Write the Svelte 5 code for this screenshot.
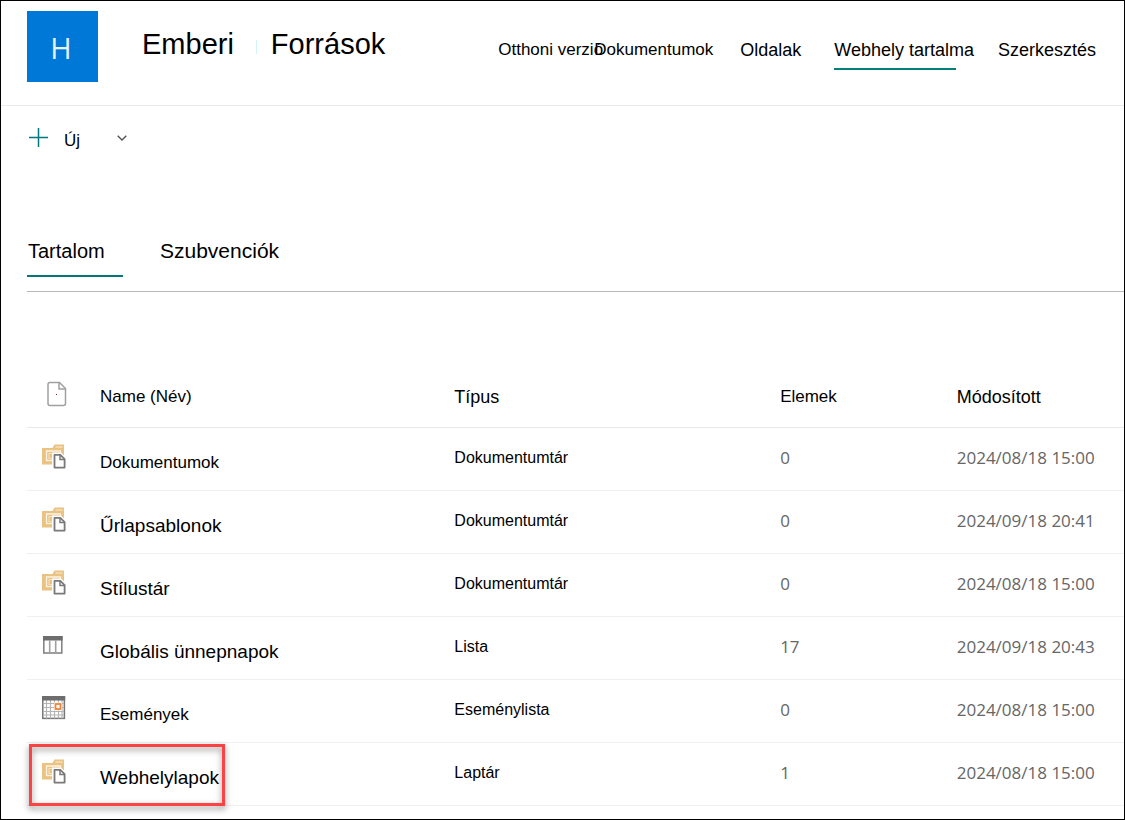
<script>
    const navItems = [
        { label: 'Otthoni verzió', kind: 'home' },
        { label: 'Dokumentumok', kind: 'docs' },
        { label: 'Oldalak', kind: 'pages large' },
        { label: 'Webhely tartalma', kind: 'contents large', current: true },
        { label: 'Szerkesztés', kind: 'edit large' }
    ];

    const rows = [
        { icon: 'library', name: 'Dokumentumok', size: 'regular', type: 'Dokumentumtár', items: 0, modified: '2024/08/18 15:00' },
        { icon: 'library', name: 'Űrlapsablonok', size: 'large', type: 'Dokumentumtár', items: 0, modified: '2024/09/18 20:41' },
        { icon: 'library', name: 'Stílustár', size: 'large', type: 'Dokumentumtár', items: 0, modified: '2024/08/18 15:00' },
        { icon: 'list', name: 'Globális ünnepnapok', size: 'large', type: 'Lista', items: 17, modified: '2024/09/18 20:43' },
        { icon: 'events', name: 'Események', size: 'regular', type: 'Eseménylista', items: 0, modified: '2024/08/18 15:00' },
        { icon: 'library', name: 'Webhelylapok', size: 'large', type: 'Laptár', items: 1, modified: '2024/08/18 15:00', highlighted: true }
    ];

    let activeTab = $state('contents');
</script>

<div class="page">
    <header class="site-header">
        <div class="logo">H</div>
        <h1 class="title">
            <span>Emberi</span>
            <span class="title-divider"></span>
            <span>Források</span>
        </h1>
        <nav class="site-nav">
            {#each navItems as item}
                <a href="#top" class="nav-link {item.kind}" class:current={item.current}>{item.label}</a>
            {/each}
        </nav>
    </header>

    <div class="command-bar">
        <button class="new-button" type="button">
            <svg width="20" height="20" viewBox="0 0 20 20" aria-hidden="true">
                <path d="M10.5 0V19M1 9.5H20" stroke="#03787c" stroke-width="1.5" fill="none" />
            </svg>
            <span class="new-label">Új</span>
            <svg class="chevron" width="10" height="6" viewBox="0 0 10 6" aria-hidden="true">
                <path d="M0.7 0.7L5 4.9L9.3 0.7" stroke="#555" stroke-width="1.4" fill="none" />
            </svg>
        </button>
    </div>

    <main class="content">
        <div class="tabs" role="tablist">
            <button
                type="button"
                role="tab"
                class="tab"
                class:active={activeTab === 'contents'}
                aria-selected={activeTab === 'contents'}
                onclick={() => (activeTab = 'contents')}
            >Tartalom</button>
            <button
                type="button"
                role="tab"
                class="tab"
                class:active={activeTab === 'subsites'}
                aria-selected={activeTab === 'subsites'}
                onclick={() => (activeTab = 'subsites')}
            >Szubvenciók</button>
        </div>

        <table class="list">
            <thead>
                <tr>
                    <th class="col-icon">
                        <svg width="20" height="26" viewBox="0 0 20 26" aria-hidden="true">
                            <path d="M3 1.5H12.5L18.5 7.5V22.5Q18.5 24.5 16.5 24.5H3Q1 24.5 1 22.5V3.5Q1 1.5 3 1.5Z" fill="#fff" stroke="#a0a0a0" stroke-width="1.5" />
                            <path d="M12 1.5V8H18.5" fill="none" stroke="#a0a0a0" stroke-width="1.5" />
                            <rect x="9" y="13" width="1" height="1" fill="#7a1f1f" />
                        </svg>
                    </th>
                    <th class="col-name">Name (Név)</th>
                    <th class="col-type large">Típus</th>
                    <th class="col-items">Elemek</th>
                    <th class="col-modified large">Módosított</th>
                </tr>
            </thead>
            <tbody>
                {#each rows as row}
                    <tr>
                        <td class="col-icon" class:highlighted={row.highlighted}>
                            {#if row.icon === 'library'}
                                <svg width="24" height="25" viewBox="0 0 24 25" aria-hidden="true">
                                    <path d="M0 4H10.5L12.5 0.5H22V20.5H0Z" fill="#eac282" />
                                    <path d="M13.5 3H20.5" stroke="#f8e6c8" stroke-width="1.2" />
                                    <path d="M4.5 17V7H18.5V10" fill="none" stroke="#fdf3e2" stroke-width="1.3" />
                                    <path d="M4 16.5H11" stroke="#fdf3e2" stroke-width="1.3" />
                                    <rect x="7" y="9.5" width="7" height="5" fill="none" stroke="#f8e2c0" stroke-width="1" />
                                    <path d="M9 8.5H19L24 13.5V25H10V8.5Z" fill="#fff" />
                                    <path d="M12.5 10.8H18.3L22.6 15.1V23.6H12.5Z" fill="#fff" stroke="#797979" stroke-width="1.8" stroke-linejoin="round" />
                                    <path d="M18 11V15.5H22.6" fill="none" stroke="#797979" stroke-width="1.5" />
                                </svg>
                            {:else if row.icon === 'list'}
                                <svg width="21" height="18" viewBox="0 0 21 18" aria-hidden="true">
                                    <rect x="1.8" y="0.8" width="18" height="16.2" fill="#fff" stroke="#858585" stroke-width="1.6" />
                                    <rect x="1" y="0" width="19.6" height="4.5" fill="#6d6d6d" />
                                    <path d="M7.7 4.5V17M13.7 4.5V17" stroke="#a0a0a0" stroke-width="1.6" />
                                </svg>
                            {:else}
                                <svg width="24" height="24" viewBox="0 0 24 24" aria-hidden="true">
                                    <rect x="0.8" y="0.8" width="21.6" height="21.6" fill="#fff" stroke="#777" stroke-width="1.5" />
                                    <path d="M4.5 4V22.5M8.5 4V22.5M12.5 4V22.5M16.5 4V22.5M20 4V22.5M1 7.5H22M1 11.5H22M1 15.5H22M1 19H22" stroke="#b4b4b4" stroke-width="1.2" />
                                    <rect x="0" y="0" width="23.2" height="4.5" fill="#6d6d6d" />
                                    <rect x="12" y="6.5" width="8" height="8" fill="#fff" />
                                    <rect x="13.5" y="8" width="5" height="5" fill="#fff" stroke="#ef8435" stroke-width="1.8" />
                                </svg>
                            {/if}
                        </td>
                        <td class="col-name"><a href="#top" class={row.size}>{row.name}</a></td>
                        <td class="col-type">{row.type}</td>
                        <td class="col-items">{row.items}</td>
                        <td class="col-modified">{row.modified}</td>
                    </tr>
                {/each}
            </tbody>
        </table>
    </main>
</div>

<style>
    :global(body) {
        background: #fff;
    }

    .page {
        box-sizing: border-box;
        min-height: 100vh;
        border: 1px solid #000;
        color: #000;
        font-family: "Liberation Sans", Arial, sans-serif;
        font-size: 17px;
        line-height: 20px;
    }

    .site-header {
        display: flex;
        align-items: flex-start;
        padding: 10px 28px 23px 26px;
        border-bottom: 1px solid #eaeaea;
    }

    .logo {
        display: flex;
        align-items: center;
        justify-content: center;
        flex: none;
        box-sizing: border-box;
        width: 71px;
        height: 71px;
        padding: 2px 3px 0 0;
        background: #0078d7;
        color: #e6f2fc;
        font-family: "Open Sans", "Noto Sans", sans-serif;
        font-size: 29px;
        font-weight: 400;
    }

    .title {
        display: flex;
        align-items: flex-start;
        margin: 17px 0 0 44px;
        font-size: 29px;
        font-weight: 400;
        line-height: 33px;
        white-space: nowrap;
    }

    .title-divider {
        width: 1px;
        height: 14px;
        margin: 12px 14px 0 22px;
        background: #d3f5f7;
    }

    .site-nav {
        display: flex;
        gap: 24px;
        margin-top: 29px;
        margin-left: auto;
    }

    .nav-link {
        position: relative;
        padding-bottom: 10px;
        color: #000;
        text-decoration: none;
        white-space: nowrap;
    }

    .large {
        font-size: 18px;
    }

    .nav-link.home {
        width: 72px;
    }

    .nav-link.docs {
        width: 122px;
    }

    .nav-link.pages {
        width: 70px;
    }

    .nav-link.current::after {
        content: "";
        position: absolute;
        bottom: 0;
        left: 0;
        width: 122px;
        height: 2px;
        background: #038078;
    }

    .command-bar {
        padding: 19px 27px 0;
    }

    button {
        padding: 0;
        border: none;
        background: none;
        color: inherit;
        font: inherit;
        cursor: pointer;
    }

    .new-button {
        display: flex;
        align-items: center;
    }

    .new-label {
        padding-top: 6px;
        margin: 0 37px 0 16px;
    }

    .content {
        padding: 88px 0 0 26px;
    }

    .tabs {
        display: flex;
        gap: 36px;
        padding-bottom: 14px;
        border-bottom: 1px solid #b8b8b8;
    }

    .tab {
        box-sizing: border-box;
        min-width: 96px;
        padding: 0 0 12px 1px;
        border-bottom: 2px solid transparent;
        font-size: 20px;
        line-height: 24px;
        text-align: left;
    }

    .tab + .tab {
        font-size: 21px;
    }

    .tab.active {
        border-bottom-color: #03787c;
    }

    .list {
        width: 100%;
        margin-top: 74px;
        border-spacing: 0;
        table-layout: fixed;
    }

    th,
    td {
        box-sizing: border-box;
        padding: 0;
        text-align: left;
        white-space: nowrap;
    }

    th {
        height: 62px;
        border-bottom: 1px solid #e8e8e8;
        font-weight: 400;
    }

    td {
        height: 63px;
        padding-bottom: 4px;
        border-bottom: 1px solid #f0f0f0;
    }

    svg {
        display: block;
    }

    .col-icon {
        width: 73px;
        padding-left: 15px;
    }

    td.col-icon {
        padding-bottom: 6px;
    }

    th.col-icon {
        padding: 0 0 6px 20px;
    }

    th.col-name {
        width: 32.3%;
    }

    th.col-type {
        width: 29.7%;
    }

    th.col-items {
        width: 16.1%;
    }

    td.col-name {
        padding: 8px 0 0;
    }

    td.col-name a {
        color: #000;
        text-decoration: none;
    }

    td.col-name a.large {
        font-size: 19px;
    }

    td.col-type {
        padding-bottom: 2px;
        font-size: 16px;
    }

    td.col-items,
    td.col-modified {
        padding-bottom: 3px;
        color: #666;
        font-family: "Open Sans", "Noto Sans", sans-serif;
    }

    .highlighted {
        position: relative;
    }

    /* call-out frame around the row that the reader should click */
    .highlighted::after {
        content: "";
        position: absolute;
        top: 1px;
        left: 2px;
        box-sizing: border-box;
        width: 196px;
        height: 62px;
        border: 3px solid #fb4343;
        filter: drop-shadow(0 3px 3px rgba(0, 0, 0, 0.45));
        pointer-events: none;
    }
</style>
